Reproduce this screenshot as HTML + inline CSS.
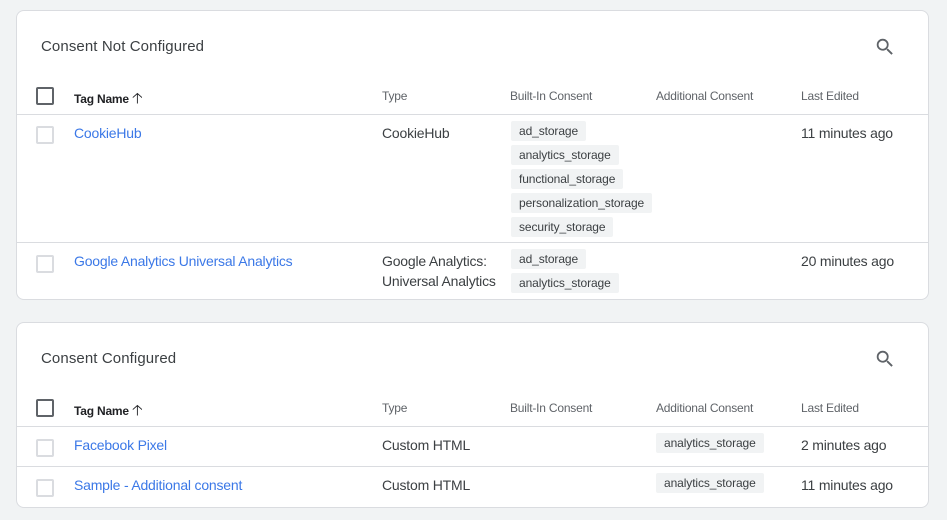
<!DOCTYPE html><html><head><style>
body{margin:0;background:#f1f3f4;font-family:"Liberation Sans",Arial,sans-serif;width:947px;height:520px;position:relative;overflow:hidden}
.card{position:absolute;left:16px;width:913px;background:#fff;border:1px solid #dadce0;border-radius:8px;box-sizing:border-box}
.a{position:absolute;white-space:nowrap}
.t{font-size:15px;color:#3c4043;left:24px;letter-spacing:0.1px}
.h{font-size:12px;color:#5f6368;letter-spacing:-0.2px}
.hn{font-size:12px;color:#202124;font-weight:bold;letter-spacing:-0.2px}
.l{position:absolute;left:0;right:0;height:1px;background:#dadce0}
.n{font-size:14px;color:#3b78e7;letter-spacing:-0.2px}
.x{font-size:14px;color:#3c4043;letter-spacing:-0.2px}
.c{font-size:12px;color:#3c4043;background:#f1f3f4;border-radius:2px;padding:0 8px;height:20px;line-height:20px;letter-spacing:-0.1px}
.cb{position:absolute;width:14px;height:14px;border:2px solid #5f6368;border-radius:2px;left:19px}
.cbl{position:absolute;width:14px;height:14px;border:2px solid #dadce0;border-radius:2px;left:19px}
</style></head><body>
<div class="card" style="top:10px;height:290px">
<div class="a t" style="top:27px">Consent Not Configured</div>
<svg class="a" style="left:857px;top:25px" width="22" height="22" viewBox="0 0 24 24"><path fill="#5f6368" d="M15.5 14h-.79l-.28-.27A6.47 6.47 0 0016 9.5 6.5 6.5 0 109.5 16c1.61 0 3.09-.59 4.23-1.57l.27.28v.79l5 4.99L20.49 19l-4.99-5zm-6 0C7.01 14 5 11.99 5 9.5S7.01 5 9.5 5 14 7.01 14 9.5 11.99 14 9.5 14z"/></svg>
<div class="cb" style="top:76px"></div>
<div class="a hn" style="left:57px;top:77px">Tag Name <span style="font-weight:normal;font-size:15px">&#129121;</span></div>
<div class="a h" style="left:365px;top:78px">Type</div>
<div class="a h" style="left:493px;top:78px">Built-In Consent</div>
<div class="a h" style="left:639px;top:78px">Additional Consent</div>
<div class="a h" style="left:784px;top:78px">Last Edited</div>
<div class="l" style="top:103px"></div>
<div class="cbl" style="top:115px"></div>
<div class="a n" style="left:57px;top:114px">CookieHub</div>
<div class="a x" style="left:365px;top:114px">CookieHub</div>
<div class="a c" style="left:494px;top:110px">ad_storage</div>
<div class="a c" style="left:494px;top:134px">analytics_storage</div>
<div class="a c" style="left:494px;top:158px">functional_storage</div>
<div class="a c" style="left:494px;top:182px">personalization_storage</div>
<div class="a c" style="left:494px;top:206px">security_storage</div>
<div class="a x" style="left:784px;top:114px">11 minutes ago</div>
<div class="l" style="top:231px"></div>
<div class="cbl" style="top:244px"></div>
<div class="a n" style="left:57px;top:242px">Google Analytics Universal Analytics</div>
<div class="a x" style="left:365px;line-height:20px;top:240px">Google Analytics:<br>Universal Analytics</div>
<div class="a c" style="left:494px;top:238px">ad_storage</div>
<div class="a c" style="left:494px;top:262px">analytics_storage</div>
<div class="a x" style="left:784px;top:242px">20 minutes ago</div>
</div>
<div class="card" style="top:322px;height:186px">
<div class="a t" style="top:27px">Consent Configured</div>
<svg class="a" style="left:857px;top:25px" width="22" height="22" viewBox="0 0 24 24"><path fill="#5f6368" d="M15.5 14h-.79l-.28-.27A6.47 6.47 0 0016 9.5 6.5 6.5 0 109.5 16c1.61 0 3.09-.59 4.23-1.57l.27.28v.79l5 4.99L20.49 19l-4.99-5zm-6 0C7.01 14 5 11.99 5 9.5S7.01 5 9.5 5 14 7.01 14 9.5 11.99 14 9.5 14z"/></svg>
<div class="cb" style="top:76px"></div>
<div class="a hn" style="left:57px;top:77px">Tag Name <span style="font-weight:normal;font-size:15px">&#129121;</span></div>
<div class="a h" style="left:365px;top:78px">Type</div>
<div class="a h" style="left:493px;top:78px">Built-In Consent</div>
<div class="a h" style="left:639px;top:78px">Additional Consent</div>
<div class="a h" style="left:784px;top:78px">Last Edited</div>
<div class="l" style="top:103px"></div>
<div class="cbl" style="top:116px"></div>
<div class="a n" style="left:57px;top:114px">Facebook Pixel</div>
<div class="a x" style="left:365px;top:114px">Custom HTML</div>
<div class="a c" style="left:639px;top:110px">analytics_storage</div>
<div class="a x" style="left:784px;top:114px">2 minutes ago</div>
<div class="l" style="top:143px"></div>
<div class="cbl" style="top:156px"></div>
<div class="a n" style="left:57px;top:154px">Sample - Additional consent</div>
<div class="a x" style="left:365px;top:154px">Custom HTML</div>
<div class="a c" style="left:639px;top:150px">analytics_storage</div>
<div class="a x" style="left:784px;top:154px">11 minutes ago</div>
</div>
</body></html>
